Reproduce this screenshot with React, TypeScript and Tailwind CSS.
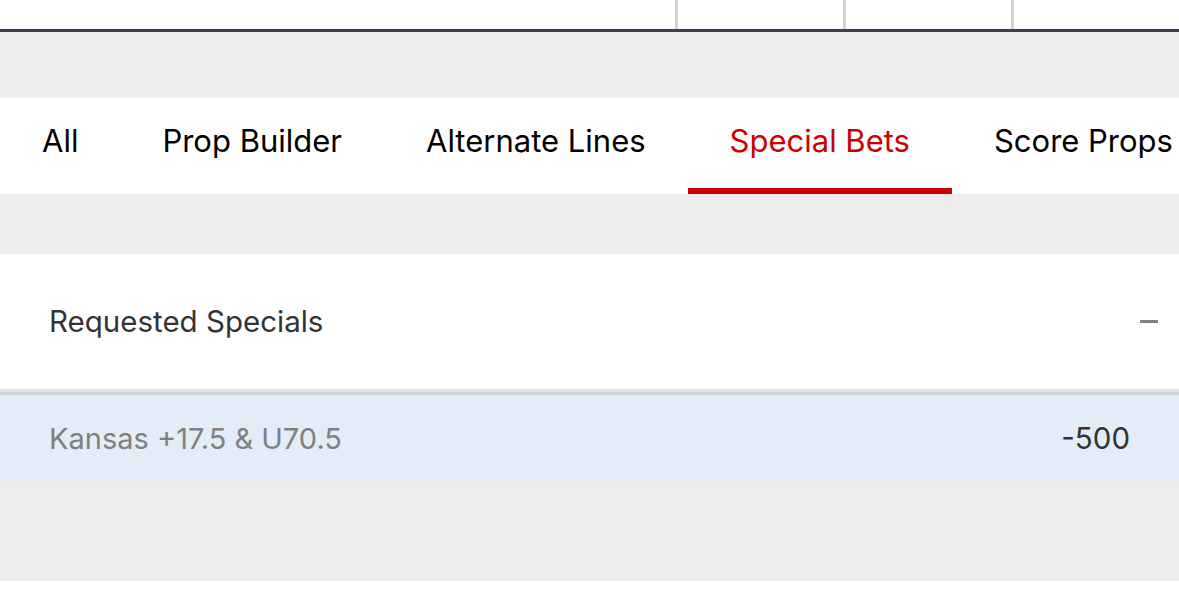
import React from "react";

const tabs = ["All", "Prop Builder", "Alternate Lines", "Special Bets", "Score Props"];

export default function App() {
  const active = "Special Bets";

  return (
    <div
      className="w-[1179px] h-[593px] overflow-hidden bg-white"
      style={{ fontFamily: "Inter, 'Noto Sans', sans-serif" }}
    >
      {/* top strip with column dividers */}
      <div className="h-[29px] flex justify-end bg-white">
        <div className="w-[3px] bg-[#d3d3d3] mr-[165px]" />
        <div className="w-[3px] bg-[#d3d3d3] mr-[165px]" />
        <div className="w-[3px] bg-[#d3d3d3] mr-[165px]" />
      </div>
      <div className="h-[3px] bg-[#37414d]" />

      <div className="h-[66px] bg-[#ececec]" />

      {/* tabs */}
      <div className="h-[96px] flex bg-white whitespace-nowrap">
        {tabs.map((t) => (
          <div
            key={t}
            className={
              t === active
                ? "relative flex items-center px-[42px] text-[31px] text-[#cc0000]"
                : "relative flex items-center px-[42px] text-[31px] text-black"
            }
          >
            <span className="-mt-[9px]">{t}</span>
            {t === active && (
              <div className="absolute left-0 right-0 bottom-0 h-[6px] bg-[#cc0000]" />
            )}
          </div>
        ))}
      </div>

      <div className="h-[60px] bg-[#ececec]" />

      {/* market header */}
      <div className="h-[135px] flex items-center justify-between bg-white pl-[49px] pr-[21px]">
        <span className="text-[29.5px] text-[#333333]">Requested Specials</span>
        <span className="block w-[18px] h-[3px] bg-[#808080]" />
      </div>
      <div className="h-[3px] bg-[#e2e2e2]" />
      <div className="h-[3px] bg-[#d3d3d3]" />

      {/* selection row */}
      <div className="h-[87px] flex items-center justify-between bg-[#e3edf7] pl-[49px] pr-[49px]">
        <span className="text-[29px] text-[#808080]">Kansas +17.5 &amp; U70.5</span>
        <span className="text-[29.5px] text-[#333333]">-500</span>
      </div>

      <div className="h-[99px] bg-[#ececec]" />
      <div className="h-[12px] bg-white" />
    </div>
  );
}
